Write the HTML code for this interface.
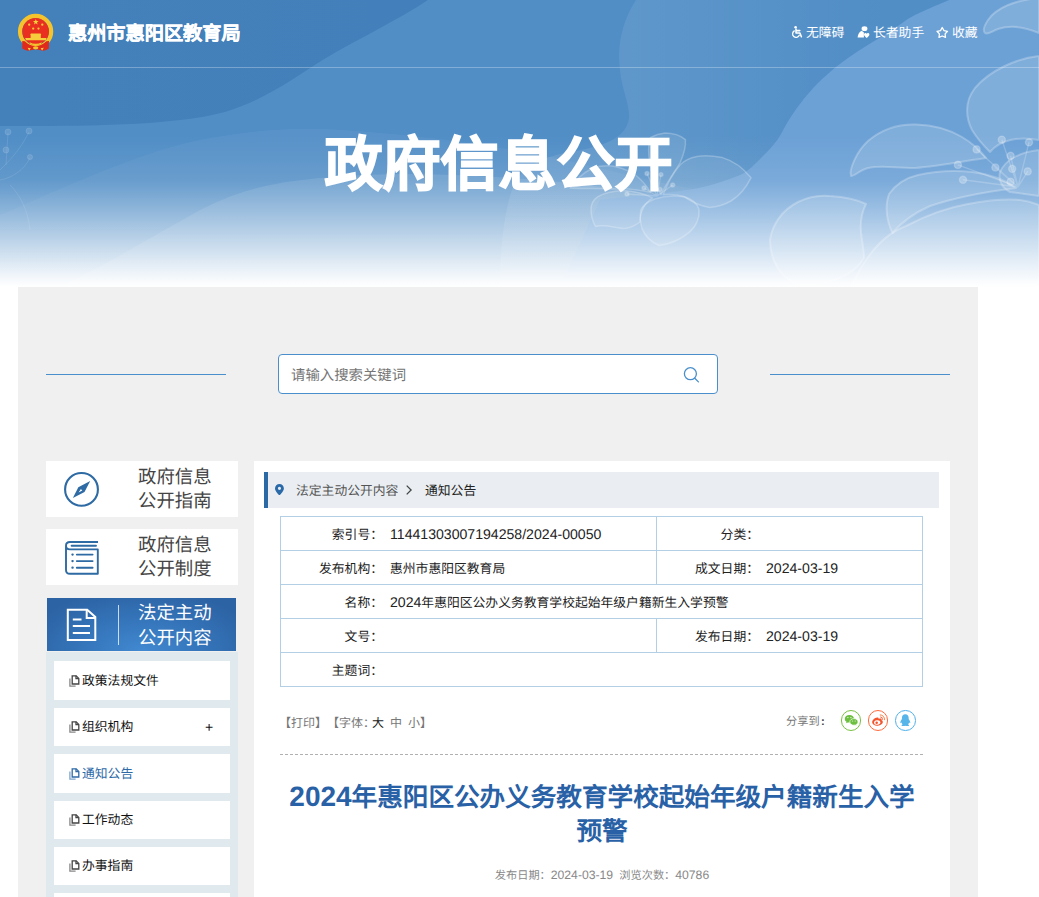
<!DOCTYPE html>
<html lang="zh-CN">
<head>
<meta charset="utf-8">
<title>2024年惠阳区公办义务教育学校起始年级户籍新生入学预警</title>
<style>
*{margin:0;padding:0;box-sizing:border-box;}
html,body{width:1039px;height:897px;overflow:hidden;background:#fff;}
body{position:relative;font-family:"Liberation Sans",sans-serif;color:#333;font-size:12.8px;-webkit-font-smoothing:antialiased;text-rendering:geometricPrecision;text-spacing-trim:space-all;}
a{color:inherit;text-decoration:none;}
ul{list-style:none;}
.abs{position:absolute;}
.n{font-size:14.1px;}

/* ---------- banner ---------- */
#banner{position:absolute;left:0;top:0;width:1039px;height:287px;overflow:hidden;background:#518ec6;}
#banner svg.bg{position:absolute;left:0;top:0;width:1039px;height:287px;display:block;}
#hd-line{position:absolute;left:0;top:67px;width:1039px;height:1px;background:rgba(255,255,255,.28);}
#emblem{position:absolute;left:17px;top:13px;width:37px;height:39px;}
#site-name{-webkit-text-stroke:.35px #fff;position:absolute;left:68px;top:23.5px;height:22px;line-height:22px;font-size:19.2px;font-weight:bold;color:#fff;white-space:nowrap;letter-spacing:0;}
#tools{position:absolute;left:780px;top:20px;width:200px;height:24px;color:#fff;font-size:12.8px;line-height:24px;white-space:nowrap;}
#tools a{position:absolute;top:.5px;height:24px;display:block;}
#tools svg{position:absolute;display:block;}
#big-title{-webkit-text-stroke:1.6px #fff;position:absolute;left:18.5px;top:128.8px;width:960px;height:74px;line-height:74px;text-align:center;font-size:58px;transform:scaleY(1.015);font-weight:bold;color:#fff;white-space:nowrap;}

/* ---------- panel ---------- */
#panel{position:absolute;left:18px;top:287px;width:960px;height:610px;background:#f0f0f0;}
.hline{position:absolute;top:374px;height:1px;width:180px;background:#4a8fcc;}
#search{position:absolute;left:278px;top:354px;width:440px;height:40px;border:1px solid #4a8fcc;border-radius:4px;background:#fff;}
#search span{position:absolute;left:12px;top:1.5px;height:38px;line-height:38px;font-size:14.4px;color:#757575;white-space:nowrap;}
#search svg{position:absolute;left:403px;top:11px;width:18px;height:18px;}

/* ---------- sidebar ---------- */
.nav-box{position:absolute;left:46px;width:192px;height:56px;background:#fff;}
.nav-box .t{position:absolute;left:92px;top:4px;width:80px;font-size:18.4px;line-height:24px;color:#444;white-space:nowrap;}
.nav-box svg{position:absolute;}
#nav-act{position:absolute;left:47px;top:598px;width:189px;height:53px;background:radial-gradient(ellipse 120px 62px at 50% 100%,#4189d1 0%,#3473b8 55%,#2c63a4 100%);}
#nav-act .t{position:absolute;left:91px;top:3px;width:80px;font-size:18.4px;line-height:24.5px;color:#fff;white-space:nowrap;}
#nav-act .vl{position:absolute;left:71px;top:7px;width:1px;height:40px;background:rgba(255,255,255,.75);}
#nav-act svg{position:absolute;}
#sub{position:absolute;left:46px;top:652px;width:192px;height:245px;background:#dfe9ee;overflow:hidden;}
#sub li{position:absolute;left:8px;width:176px;background:#fff;font-size:12.8px;color:#111;white-space:nowrap;}
#sub li svg{position:absolute;left:15px;width:11px;height:12px;}
#sub li span{position:absolute;left:28px;}
#sub li b{position:absolute;left:151px;font-weight:normal;font-size:14px;}
#sub li.on{color:#2e6aa8;}

/* ---------- main ---------- */
#main{position:absolute;left:254px;top:461px;width:696px;height:436px;background:#fff;}
#crumb{position:absolute;left:10px;top:11px;width:675px;height:36px;background:#eaeef2;border-left:4px solid #2a68a6;font-size:12.8px;line-height:36px;color:#555;white-space:nowrap;}
#crumb svg{position:absolute;}
#crumb span{position:absolute;top:1px;}
#info{position:absolute;left:26px;top:55px;width:642px;height:171px;border-collapse:collapse;table-layout:fixed;font-size:12.8px;color:#222;}
#info td{border:1px solid #b3cfe6;height:34px;padding:0;vertical-align:middle;white-space:nowrap;position:relative;}
#info .l{display:inline-block;text-align:right;}
#info .v{display:inline-block;}
#bar{position:absolute;left:25px;top:250.5px;width:643px;height:22px;font-size:12px;line-height:22px;color:#777;white-space:nowrap;}
#bar span{position:absolute;top:0;}
#share-l{position:absolute;font-size:11.2px;color:#777;white-space:nowrap;line-height:22px;}
.sh{position:absolute;top:249px;width:20.6px;height:20.6px;border-radius:50%;border:1px solid;background:#fff;}
.sh svg{position:absolute;left:0;top:0;width:18.6px;height:18.6px;}
#dash{position:absolute;left:26px;top:293px;width:643px;height:0;border-top:1px dashed #b0b0b0;}
#title{position:absolute;left:16px;top:319px;width:664px;text-align:center;font-size:25.6px;line-height:34.4px;font-weight:bold;color:#2961a7;}
#title .d{font-size:28px;}
#meta{position:absolute;left:16px;top:404px;width:664px;text-align:center;font-size:11.2px;line-height:20px;color:#888;white-space:nowrap;}
#meta .n{font-size:12.2px;}
</style>
</head>
<body>

<div id="banner">
<svg class="bg" viewBox="0 0 1039 287" preserveAspectRatio="none">
<defs>
<linearGradient id="fade" x1="0" y1="0" x2="0" y2="1">
<stop offset="0" stop-color="#fff" stop-opacity="0"/>
<stop offset="0.47" stop-color="#fff" stop-opacity="0"/>
<stop offset="0.557" stop-color="#fff" stop-opacity="0.05"/>
<stop offset="0.627" stop-color="#fff" stop-opacity="0.10"/>
<stop offset="0.662" stop-color="#fff" stop-opacity="0.17"/>
<stop offset="0.732" stop-color="#fff" stop-opacity="0.33"/>
<stop offset="0.80" stop-color="#fff" stop-opacity="0.50"/>
<stop offset="0.87" stop-color="#fff" stop-opacity="0.68"/>
<stop offset="0.94" stop-color="#fff" stop-opacity="0.86"/>
<stop offset="0.976" stop-color="#fff" stop-opacity="0.95"/>
<stop offset="1" stop-color="#fff" stop-opacity="1"/>
</linearGradient>
<linearGradient id="r2g" gradientUnits="userSpaceOnUse" x1="600" y1="0" x2="900" y2="0">
<stop offset="0" stop-color="#fff" stop-opacity=".09"/>
<stop offset=".55" stop-color="#fff" stop-opacity=".03"/>
<stop offset="1" stop-color="#fff" stop-opacity="0"/>
</linearGradient>
<linearGradient id="darkg" x1="0" y1="0" x2="1" y2="0">
<stop offset="0" stop-color="#4481ba"/>
<stop offset="1" stop-color="#4380bb"/>
</linearGradient>
</defs>
<rect width="1039" height="287" fill="#518ec6"/>
<!-- dark top-left blob -->
<path d="M0 0H428C398 20 360 38 326 58C296 76 270 98 225 112C170 127 70 126 0 126Z" fill="url(#darkg)"/>
<!-- hill highlights from lower-left -->
<path d="M0 215C60 190 130 155 200 140C250 130 290 128 320 129C380 131 480 142 560 159C610 170 650 182 700 190V287H0Z" fill="#fff" opacity=".045"/>
<path d="M60 287C100 268 150 238 200 210C230 195 250 189 270 185C300 179 340 175 400 174C480 174 560 180 640 192L700 200V287Z" fill="#fff" opacity=".10"/>
<!-- mid tongue with soft left highlight -->
<path d="M636 0C622 22 617 45 620 70C622 90 630 105 629 118C627 135 610 146 570 152C545 156 525 166 515 182C505 205 500 245 500 287H960V0Z" fill="url(#r2g)"/>
<!-- right light region -->
<path d="M949 0C935 6 925 10 915 15C905 20 897 27 888 33C879 38 871 43 863 48C853 54 844 61 836 67C829 73 823 78 818 83C812 89 807 95 803 100C795 110 787 122 781 134C775 145 766 153 756 163C750 169 745 173 739 175.6C728 180 718 183 707.6 186C697 188.6 687 190 676 191.5C650 195 620 197 600 200L560 287H1039V0Z" fill="#6ca1d6"/>
<!-- flowers -->
<g fill="#fff" fill-opacity=".14" stroke="#fff" stroke-opacity=".24" stroke-width="2" stroke-linejoin="round">
<path d="M1039 -2C1015 0 996 8 988 20C984 26 983 31 985 33C988 35 992 31 998 29C1010 25 1025 27 1039 33Z"/>
<path d="M1039 56C1018 58 990 70 975 88C964 102 966 118 972 130C978 140 984 146 990 152C1000 140 1018 136 1039 140Z"/>
<path d="M851 176C849 170 856 152 868 141C882 129 900 124 916 124.5C936 125 950 130 962 137C972 143 980 150 986 158C970 160 940 166 915 168C895 168 880 165 868 168C860 170 855 176 851 176Z"/>
<path d="M889 194C896 184 905 178 918 175C936 171 955 170 972 172C990 174 1005 180 1016 188C1000 190 960 196 930 206C912 214 900 224 892.5 233C886 220 885 205 889 194Z"/>
<path d="M770 240C772 225 782 210 798 202C810 196 820 195 830 196C845 197 858 200 866 204C862 212 860 222 861 232C862 242 864 250 864 258C855 275 830 285 800 285C782 280 770 262 770 240Z"/>
<path d="M866 260C876 245 890 232 906 226C925 216 945 208 968 204C990 200 1008 199 1020 200C1028 201 1034 203 1039 205V290H850C855 278 860 268 866 260Z"/>
<path d="M1039 150C1020 152 1005 160 1000 172C998 180 1002 188 1010 192L1039 196Z"/>
</g>
<g fill="#fff" fill-opacity=".09" stroke="#fff" stroke-opacity=".24" stroke-width="1.5" stroke-linejoin="round">
<!-- small centre flower -->
<path d="M661 194.7C668 180 676 170 680 163C684 154 686 146 685.4 139.6C680 135 672 133 665 133C660 133.5 655 135 650.5 137.5C646 150 650 175 661 194.7Z"/>
<path d="M663 194.7C668 182 674 172 680 165C685 160 690 158 697 156.6C705 155 714 156 722.4 157.6C734 161 744 169 751 177.8C746 188 739 196 731 201C724 205 717 207 709.7 207.4C700 206 692 202 684.3 196.8C676 194 670 194 663 194.7Z"/>
<path d="M654.7 199C664 196 675 195.5 684.3 196.8C692 199 697 203 699 209.5C700 218 696 227 688.6 232.8C680 240 670 244 659 245.5C651 242 645 236 642 228.6C640 222 640 215 641 209.5C644 204 649 201 654.7 199Z"/>
<path d="M652.6 197.9C643 193 633 191 623 190.5C613 191 604 193 597.5 196.8C593 200 591 204 591 209.5C591 216 593 222 595.4 226.5C605 224 615 228 625 228.6C631 228 636 225 640 222C640 212 645 203 652.6 197.9Z"/>
<path d="M570 188C576 180 583 173 591 169C598 166 605 165.5 612 166C620 167 627 170 633.5 173.5C641 179 647 186 650.5 192.6C640 190 625 188 612 189C598 188 582 189 570 188Z"/>
</g>
<g fill="#fff" fill-opacity=".26" stroke="#fff" stroke-opacity=".2" stroke-width="1.4">
<path d="M1018 187L1001.8 139.7M1018 187L1029 142.3M1018 187L976.6 149.4M1018 187L1010.6 155.8M1018 187L957.9 164.9M1018 187L995.4 167.5M1018 187L1027.7 171.4M1018 187L963 179.8" fill="none"/>
<circle cx="1001.8" cy="139.7" r="3.6"/><circle cx="1029" cy="142.3" r="3.6"/><circle cx="976.6" cy="149.4" r="3.6"/><circle cx="1010.6" cy="155.8" r="3.6"/><circle cx="957.9" cy="164.9" r="3.6"/><circle cx="995.4" cy="167.5" r="3.6"/><circle cx="1012.2" cy="168.8" r="3.6"/><circle cx="1027.7" cy="171.4" r="3.6"/><circle cx="963" cy="179.8" r="3.6"/><circle cx="1010.6" cy="181.7" r="3.6"/>
<path d="M657 196L647 173.5M657 196L661 174.6M657 196L644 188M657 196L672.7 185M657 196L627 194" fill="none"/>
<circle cx="647" cy="173.5" r="2"/><circle cx="661" cy="174.6" r="2"/><circle cx="644" cy="188" r="2"/><circle cx="660" cy="189.4" r="2"/><circle cx="672.7" cy="185" r="2"/><circle cx="627" cy="194" r="2"/>
</g>
<g fill="#fff" fill-opacity=".12" stroke="#fff" stroke-opacity=".1" stroke-width="1">
<circle cx="8" cy="132" r="3"/><circle cx="29" cy="131" r="3"/><circle cx="6" cy="150" r="3"/><circle cx="30" cy="157" r="2.6"/>
<path d="M0 170C10 160 20 150 29 132M6 165L8 133M0 180C12 178 24 170 30 158M10 185C20 195 28 210 30 230" fill="none"/>
</g>
<rect width="1039" height="287" fill="url(#fade)"/>
</svg>
<div id="hd-line"></div>
</div>

<svg id="emblem" viewBox="17 13 37 39">
<circle cx="35.6" cy="31.5" r="15.5" fill="none" stroke="#f5c42d" stroke-width="4.3"/>
<circle cx="35.6" cy="31.4" r="13.3" fill="#e92f1f"/>
<path d="M22.2 41L24.9 41.2A14.5 14.5 0 0 0 46.3 41.2L49 41L48.8 48.6Q45.5 51.2 42 50.5L35.7 49.3L29.4 50.5Q26 51.2 22.3 48.6Z" fill="#e02a1a"/>
<path d="M35.8 18.9l.75 2.05 2.15.05-1.7 1.35.6 2.1-1.8-1.2-1.8 1.2.6-2.1-1.7-1.35 2.15-.05z" fill="#f7d23c"/>
<circle cx="29.2" cy="24.7" r="1.15" fill="#f5c838"/><circle cx="42.3" cy="24.7" r="1.15" fill="#f5c838"/>
<circle cx="33.2" cy="28.6" r="1.15" fill="#f5c838"/><circle cx="38.5" cy="28.6" r="1.15" fill="#f5c838"/>
<path d="M30.9 33.4H40.5L41.3 35H30.1ZM30.6 35H40.8V38H30.6ZM25.2 38H46.6L45.8 40.2H26Z" fill="#f6cd3a"/>
<path d="M29.5 42.2Q35.7 45.2 41.9 42.2L41 43.9Q35.7 46.3 30.4 43.9Z" fill="#f5c42d"/>
<ellipse cx="35.7" cy="47.7" rx="2.7" ry="1.5" fill="#f5c42d"/>
<path d="M27.6 47.8l3.2 .4-1.6 2.4zM43.8 47.8l-3.2 .4 1.6 2.4z" fill="#f6d348"/>
</svg>
<div id="site-name">惠州市惠阳区教育局</div>
<div id="big-title">政府信息公开</div>

<div id="tools">
<svg style="left:0;top:0;width:200px;height:24px" viewBox="780 20 200 24" fill="none" stroke="#fff" stroke-width="1.3" stroke-linecap="round" stroke-linejoin="round">
<circle cx="795.6" cy="27.3" r="1.3" fill="#fff" stroke="none"/>
<path d="M796 29V32.9H799.8L801.4 36.8M796 30.6H799.8" stroke-width="1.55"/>
<path d="M794.3 30.9A3.5 3.5 0 1 0 799.3 35.3"/>
<g fill="#fff" stroke="none">
<ellipse cx="864.5" cy="28.7" rx="2.9" ry="2.35"/>
<path d="M857.6 37.5C857.9 34.4 859.3 31.7 861.7 30.8L863.9 32.6V37.5Z"/>
<path d="M866.7 37.9C865.5 36.9 864 35.7 864 34.4C864 33.5 864.7 32.9 865.4 32.9C866 32.9 866.5 33.3 866.7 33.7C866.9 33.3 867.4 32.9 868 32.9C868.7 32.9 869.4 33.5 869.4 34.4C869.4 35.7 867.9 36.9 866.7 37.9Z"/>
</g>
<path d="M942.2 27.5L944.0 30.6L947.5 31.3L945.1 33.9L945.5 37.4L942.2 36.0L939.0 37.4L939.4 33.9L937.0 31.3L940.5 30.6Z" stroke-width="1.3"/>
</svg>
<a style="left:26px">无障碍</a>
<a style="left:93px">长者助手</a>
<a style="left:172px">收藏</a>
</div>

<div id="panel"></div>
<div class="hline" style="left:46px"></div>
<div class="hline" style="left:770px"></div>
<div id="search"><span>请输入搜索关键词</span>
<svg style="left:0;top:0;width:438px;height:38px" viewBox="279 355 438 38" fill="none" stroke="#4a8fcc" stroke-width="1.3" stroke-linecap="round"><circle cx="690.4" cy="373.7" r="6"/><path d="M694.8 378.3L698.4 381.9"/></svg></div>

<div class="nav-box" style="top:461px"><svg style="left:0;top:0;width:192px;height:56px" viewBox="46 461 192 56"><circle cx="81.5" cy="489.4" r="16.4" fill="none" stroke="#2e6aa3" stroke-width="2.1"/><path d="M90.2 480.9L84.5 491.9L72.9 498L78.3 487.2Z" fill="#2e6aa3"/><path d="M80.9 488.9L82.3 490.6L78.6 492.5Z" fill="#fff"/></svg><div class="t">政府信息<br>公开指南</div></div>
<div class="nav-box" style="top:529px"><svg style="left:0;top:0;width:192px;height:56px" viewBox="46 529 192 56" fill="none" stroke="#2e6aa3" stroke-width="1.9" stroke-linecap="round" stroke-linejoin="round"><path d="M98 542H70Q66 542 66 545.7V570Q66 573.8 70 573.8H97.8V549.4H70Q66 549.4 66 545.7" stroke-linecap="butt"/><path d="M71.6 545.7H96M76.8 554.6H92.6M76.8 561.1H92.6M76.8 567.7H92.6"/><path d="M72.4 554.6h.3M72.4 561.1h.3M72.4 567.7h.3" stroke-width="2.2"/></svg><div class="t">政府信息<br>公开制度</div></div>
<div id="nav-act"><svg style="left:0;top:0;width:189px;height:53px" viewBox="47 598 189 53" fill="none" stroke="#fff" stroke-width="2"><path d="M67.8 609.7H87.2L95.3 616.9V640H67.8Z"/><path d="M86.7 609.7V618.1H95.3"/><path d="M72.8 619.4H81.5M72.8 626H90M72.8 632.9H90"/></svg><div class="vl"></div><div class="t">法定主动<br>公开内容</div></div>
<ul id="sub">
<li style="top:9px;height:39px;line-height:39px"><svg viewBox="0 0 11 12" fill="none" stroke-width="1.3" style="top:50%;margin-top:-6px"><path d="M.9 3.6V11.2H6.6" stroke="#888"/><path d="M3.2 .8H7.2L9.8 3.4V9H3.2Z" stroke="#444"/><path d="M7 .8V3.6H9.8" stroke="#444"/></svg><span>政策法规文件</span></li>
<li style="top:56px;height:38px;line-height:38px"><svg viewBox="0 0 11 12" fill="none" stroke-width="1.3" style="top:50%;margin-top:-6px"><path d="M.9 3.6V11.2H6.6" stroke="#888"/><path d="M3.2 .8H7.2L9.8 3.4V9H3.2Z" stroke="#444"/><path d="M7 .8V3.6H9.8" stroke="#444"/></svg><span>组织机构</span><b>+</b></li>
<li class="on" style="top:102px;height:39px;line-height:39px"><svg viewBox="0 0 11 12" fill="none" stroke-width="1.3" style="top:50%;margin-top:-6px"><path d="M.9 3.6V11.2H6.6" stroke="#7fa6cc"/><path d="M3.2 .8H7.2L9.8 3.4V9H3.2Z" stroke="#2e6aa8"/><path d="M7 .8V3.6H9.8" stroke="#2e6aa8"/></svg><span>通知公告</span></li>
<li style="top:149px;height:38px;line-height:38px"><svg viewBox="0 0 11 12" fill="none" stroke-width="1.3" style="top:50%;margin-top:-6px"><path d="M.9 3.6V11.2H6.6" stroke="#888"/><path d="M3.2 .8H7.2L9.8 3.4V9H3.2Z" stroke="#444"/><path d="M7 .8V3.6H9.8" stroke="#444"/></svg><span>工作动态</span></li>
<li style="top:195px;height:38px;line-height:38px"><svg viewBox="0 0 11 12" fill="none" stroke-width="1.3" style="top:50%;margin-top:-6px"><path d="M.9 3.6V11.2H6.6" stroke="#888"/><path d="M3.2 .8H7.2L9.8 3.4V9H3.2Z" stroke="#444"/><path d="M7 .8V3.6H9.8" stroke="#444"/></svg><span>办事指南</span></li>
<li style="top:241px;height:38px;line-height:38px"><span>&nbsp;</span></li>
</ul>

<div id="main">
<div id="crumb"><svg style="left:6.9px;top:11.7px;width:8.9px;height:11.5px" viewBox="0 0 9 11.5"><path fill="#2a6aa8" fill-rule="evenodd" d="M4.5 0C2 0 0 2 0 4.4C0 7.3 4.5 11.5 4.5 11.5C4.5 11.5 9 7.3 9 4.4C9 2 7 0 4.5 0ZM4.5 2.7a1.6 1.6 0 1 0 0 3.2a1.6 1.6 0 1 0 0-3.2Z"/></svg><svg style="left:137px;top:12px;width:8px;height:12px" viewBox="0 0 8 12"><path d="M1.7 1.6L6.1 6L1.7 10.4" fill="none" stroke="#444" stroke-width="1.3"/></svg><span style="left:28px">法定主动公开内容</span><span style="left:157px;color:#222">通知公告</span></div>
<table id="info">
<colgroup><col style="width:376px"><col style="width:266px"></colgroup>
<tr><td><span class="l" style="width:102px">索引号：</span><span class="v" style="margin-left:7px"><span class="n">11441303007194258/2024-00050</span></span></td><td><span class="l" style="width:102px">分类：</span></td></tr>
<tr><td><span class="l" style="width:102px">发布机构：</span><span class="v" style="margin-left:7px">惠州市惠阳区教育局</span></td><td><span class="l" style="width:102px">成文日期：</span><span class="v" style="margin-left:7px"><span class="n">2024-03-19</span></span></td></tr>
<tr><td colspan="2"><span class="l" style="width:102px">名称：</span><span class="v" style="margin-left:7px"><span class="n">2024</span>年惠阳区公办义务教育学校起始年级户籍新生入学预警</span></td></tr>
<tr><td><span class="l" style="width:102px">文号：</span></td><td><span class="l" style="width:102px">发布日期：</span><span class="v" style="margin-left:7px"><span class="n">2024-03-19</span></span></td></tr>
<tr><td colspan="2"><span class="l" style="width:102px">主题词：</span></td></tr>
</table>
<div id="bar"><span style="left:0">【打印】【字体：</span><span style="left:93px;color:#222">大</span><span style="left:111px">中</span><span style="left:129px">小】</span></div>
<div id="share-l" style="left:532px;top:250px">分享到<b style="color:#444;margin-left:1.5px">:</b></div>
<div class="sh" style="left:586.7px;border-color:#7ac143"><svg viewBox="0 0 18.6 18.6"><path d="M7.4 4.1C4.8 4.1 2.8 5.8 2.8 7.9C2.8 9.1 3.5 10.1 4.5 10.8L4.1 12.3L5.8 11.4C6.3 11.5 6.8 11.6 7.4 11.6C10 11.6 12 10 12 7.9C12 5.8 10 4.1 7.4 4.1Z" fill="#6cbf3f"/><path d="M11.9 7.6C9.6 7.6 7.8 9.1 7.8 10.9C7.8 12.7 9.6 14.2 11.9 14.2C12.4 14.2 12.8 14.1 13.2 14L14.7 14.8L14.3 13.5C15.3 12.9 16 12 16 10.9C16 9.1 14.2 7.6 11.9 7.6Z" fill="#6cbf3f" stroke="#fff" stroke-width=".7"/><circle cx="5.9" cy="6.6" r=".6" fill="#fff"/><circle cx="8.9" cy="6.6" r=".6" fill="#fff"/><circle cx="10.6" cy="10" r=".5" fill="#fff"/><circle cx="13.2" cy="10" r=".5" fill="#fff"/></svg></div>
<div class="sh" style="left:613.8px;border-color:#ff6a3c"><svg viewBox="0 0 18.6 18.6"><path d="M8.2 6.6C5.6 6.8 3 9.2 3.2 11.6C3.4 13.8 6 15 8.8 14.7C11.8 14.4 14 12.6 13.8 10.7C13.7 9.7 12.9 9.4 12.5 9.3C12.8 8.5 12.6 7.8 11.9 7.6C11.2 7.4 10.2 7.7 9.7 7.9C9.9 7.1 9.4 6.5 8.2 6.6Z" fill="#f5552d"/><ellipse cx="8.2" cy="11.5" rx="3.2" ry="2.3" fill="#fff" transform="rotate(-8 8.2 11.5)"/><circle cx="7.7" cy="11.7" r="1.25" fill="#f5552d"/><path d="M11.6 5.9A2.1 2.1 0 0 1 13.5 8.4" fill="none" stroke="#f5552d" stroke-width=".9" stroke-linecap="round"/><path d="M11.2 3.9A4.1 4.1 0 0 1 15.5 8.8" fill="none" stroke="#fb7d3a" stroke-width="1" stroke-linecap="round"/></svg></div>
<div class="sh" style="left:641.3px;border-color:#4fb0ec"><svg viewBox="0 0 18.6 18.6" fill="#58b5ea"><path d="M9.3 3.2C7.2 3.2 5.9 4.8 5.9 6.9C5.9 7.3 5.9 7.7 6 8C5.2 9 4.3 10.4 4.3 11.6C4.3 12.3 4.6 12.4 4.9 12.1C5.1 11.9 5.3 11.6 5.5 11.3C5.6 12.1 6 12.8 6.6 13.4C6 13.6 5.5 13.9 5.5 14.3C5.5 14.9 6.5 15.1 7.6 15.1C8.4 15.1 9 14.9 9.3 14.7C9.6 14.9 10.2 15.1 11 15.1C12.1 15.1 13.1 14.9 13.1 14.3C13.1 13.9 12.6 13.6 12 13.4C12.6 12.8 13 12.1 13.1 11.3C13.3 11.6 13.5 11.9 13.7 12.1C14 12.4 14.3 12.3 14.3 11.6C14.3 10.4 13.4 9 12.6 8C12.7 7.7 12.7 7.3 12.7 6.9C12.7 4.8 11.4 3.2 9.3 3.2Z"/></svg></div>
<div id="dash"></div>
<div id="title"><span class="d">2024</span>年惠阳区公办义务教育学校起始年级户籍新生入学<br>预警</div>
<div id="meta">发布日期：<span class="n">2024-03-19</span>&nbsp; 浏览次数：<span class="n">40786</span></div>
</div>

</body>
</html>
